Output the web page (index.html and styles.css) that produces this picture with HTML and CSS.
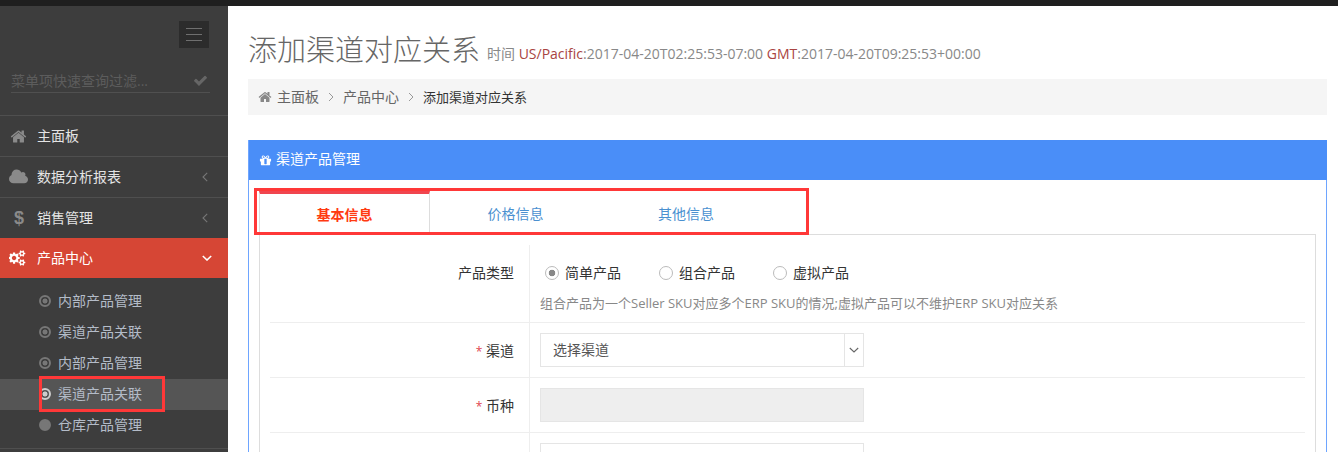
FILE: index.html
```html
<!DOCTYPE html>
<html lang="zh-CN">
<head>
<meta charset="utf-8">
<title>添加渠道对应关系</title>
<link rel="stylesheet" href="styles.css">
</head>
<body>
<div class="topbar"></div>
<div class="layout">
  <aside class="sidebar">
    <div class="toggle-row"><div class="toggle"><i></i><i></i><i></i></div></div>
    <div class="search">
      <span class="search-text">菜单项快速查询过滤...</span>
      <svg class="search-check" viewBox="0 0 1792 1792"><path d="M1671 566q0 40-28 68l-724 724-136 136q-28 28-68 28t-68-28l-136-136-362-362q-28-28-28-68t28-68l136-136q28-28 68-28t68 28l294 295 656-657q28-28 68-28t68 28l136 136q28 28 28 68z"/></svg>
    </div>
    <nav class="menu">
      <a class="item">
        <span class="item-icon"><svg class="ic-home" viewBox="0 0 1792 1792"><path d="M1472 992v480q0 26-19 45t-45 19h-384v-384h-256v384h-384q-26 0-45-19t-19-45v-480q0-1 .5-3t.5-3l575-474 575 474q1 2 1 6zm223-69l-62 74q-8 9-21 11h-3q-13 0-21-7l-692-577-692 577q-12 8-24 7-13-2-21-11l-62-74q-8-10-7-23.5t11-21.5l719-599q32-26 76-26t76 26l244 204v-195q0-14 9-23t23-9h192q14 0 23 9t9 23v408l219 182q10 8 11 21.5t-7 23.5z"/></svg></span>
        <span class="item-text">主面板</span>
      </a>
      <a class="item">
        <span class="item-icon"><svg class="ic-cloud" viewBox="0 0 1920 1792"><path d="M1920 1152q0 159-112.5 271.5t-271.5 112.5h-1088q-185 0-316.5-131.5t-131.5-316.5q0-132 71-241.5t187-163.5q-2-28-2-43 0-212 150-362t362-150q158 0 286.5 88t187.5 230q70-62 166-62 106 0 181 75t75 181q0 75-41 138 129 30 213 134.5t84 239.5z"/></svg></span>
        <span class="item-text">数据分析报表</span>
        <svg class="chev" viewBox="0 0 6 10"><path d="M5.2.8 1 5l4.2 4.2"/></svg>
      </a>
      <a class="item">
        <span class="item-icon"><span class="ic-dollar">$</span></span>
        <span class="item-text">销售管理</span>
        <svg class="chev" viewBox="0 0 6 10"><path d="M5.2.8 1 5l4.2 4.2"/></svg>
      </a>
      <a class="item item-open">
        <span class="item-icon"><svg class="ic-cogs" viewBox="0 0 2048 1792"><path d="M832 896q0-106-75-181t-181-75-181 75-75 181 75 181 181 75 181-75 75-181zm768 512q0-52-38-90t-90-38-90 38-38 90q0 53 37.5 90.5t90.5 37.5 90.5-37.5 37.5-90.5zm0-1024q0-52-38-90t-90-38-90 38-38 90q0 53 37.5 90.5t90.5 37.5 90.5-37.5 37.5-90.5zm-384 421v185q0 10-7 19.5t-16 10.5l-155 24q-11 35-32 76 34 48 90 115 7 11 7 20 0 12-7 19-23 30-82.5 89.5t-78.5 59.5q-11 0-21-7l-115-90q-37 19-77 31-11 108-23 155-7 24-30 24h-186q-11 0-20-7.5t-10-17.5l-23-153q-34-10-75-31l-118 89q-7 7-20 7-11 0-21-8-144-133-144-160 0-9 7-19 10-14 41-53t47-61q-23-44-35-82l-152-24q-10-1-17-9.5t-7-19.5v-185q0-10 7-19.5t16-10.5l155-24q11-35 32-76-34-48-90-115-7-11-7-20 0-12 7-20 22-30 82-89t79-59q11 0 21 7l115 90q34-18 77-32 11-108 23-154 7-24 30-24h186q11 0 20 7.5t10 17.5l23 153q34 10 75 31l118-89q8-7 20-7 11 0 21 8 144 133 144 160 0 8-7 19-12 16-42 54t-45 60q23 48 34 82l152 23q10 2 17 10.5t7 19.5zm640 533v140q0 16-149 31-12 27-30 52 51 113 51 138 0 4-4 7-122 71-124 71-8 0-46-47t-52-68q-20 2-30 2t-30-2q-14 21-52 68t-46 47q-2 0-124-71-4-3-4-7 0-25 51-138-18-25-30-52-149-15-149-31v-140q0-16 149-31 13-29 30-52-51-113-51-138 0-4 4-7 4-2 35-20t59-34 30-16q8 0 46 46.5t52 67.5q20-2 30-2t30 2q51-71 92-112l6-2q4 0 124 70 4 3 4 7 0 25-51 138 17 23 30 52 149 15 149 31zm0-1024v140q0 16-149 31-12 27-30 52 51 113 51 138 0 4-4 7-122 71-124 71-8 0-46-47t-52-68q-20 2-30 2t-30-2q-14 21-52 68t-46 47q-2 0-124-71-4-3-4-7 0-25 51-138-18-25-30-52-149-15-149-31v-140q0-16 149-31 13-29 30-52-51-113-51-138 0-4 4-7 4-2 35-20t59-34 30-16q8 0 46 46.5t52 67.5q20-2 30-2t30 2q51-71 92-112l6-2q4 0 124 70 4 3 4 7 0 25-51 138 17 23 30 52 149 15 149 31z"/></svg></span>
        <span class="item-text">产品中心</span>
        <svg class="chev-down" viewBox="0 0 10 6"><path d="M.8 1 5 5l4.2-4"/></svg>
      </a>
      <ul class="sub">
        <li class="sub-item"><span class="ring"></span>内部产品管理</li>
        <li class="sub-item"><span class="ring"></span>渠道产品关联</li>
        <li class="sub-item"><span class="ring"></span>内部产品管理</li>
        <li class="sub-item sub-active"><span class="ring"></span>渠道产品关联</li>
        <li class="sub-item"><span class="ring ring-full"></span>仓库产品管理</li>
      </ul>
    </nav>
    <div class="mark mark-side"></div>
  </aside>
  <main class="main">
    <h1 class="title">添加渠道对应关系<small class="subtitle">时间 <b>US/Pacific</b>:2017-04-20T02:25:53-07:00 <b>GMT</b>:2017-04-20T09:25:53+00:00</small></h1>
    <div class="crumbs">
      <svg class="crumb-home" viewBox="0 0 1792 1792"><path d="M1472 992v480q0 26-19 45t-45 19h-384v-384h-256v384h-384q-26 0-45-19t-19-45v-480q0-1 .5-3t.5-3l575-474 575 474q1 2 1 6zm223-69l-62 74q-8 9-21 11h-3q-13 0-21-7l-692-577-692 577q-12 8-24 7-13-2-21-11l-62-74q-8-10-7-23.5t11-21.5l719-599q32-26 76-26t76 26l244 204v-195q0-14 9-23t23-9h192q14 0 23 9t9 23v408l219 182q10 8 11 21.5t-7 23.5z"/></svg>
      <span>主面板</span>
      <svg class="crumb-sep" viewBox="0 0 6 10"><path d="M1 1l4 4-4 4"/></svg>
      <span>产品中心</span>
      <svg class="crumb-sep" viewBox="0 0 6 10"><path d="M1 1l4 4-4 4"/></svg>
      <span class="crumb-current">添加渠道对应关系</span>
    </div>
    <section class="panel">
      <header class="panel-head">
        <svg class="ic-gift" viewBox="0 0 1792 1792"><path d="M1056 1356v-716h-320v716q0 25 18 38.5t46 13.5h192q28 0 46-13.5t18-38.5zm-456-844h195l-126-161q-26-31-69-31-40 0-68 28t-28 68 28 68 68 28zm688-96q0-40-28-68t-68-28q-43 0-69 31l-125 161h194q40 0 68-28t28-68zm376 256v320q0 14-9 23t-23 9h-96v416q0 40-28 68t-68 28h-1088q-40 0-68-28t-28-68v-416h-96q-14 0-23-9t-9-23v-320q0-14 9-23t23-9h440q-93 0-158.5-65.5t-65.5-158.5 65.5-158.5 158.5-65.5q107 0 168 77l128 165 128-165q61-77 168-77 93 0 158.5 65.5t65.5 158.5-65.5 158.5-158.5 65.5h440q14 0 23 9t9 23z"/></svg>
        <span>渠道产品管理</span>
      </header>
      <div class="panel-body">
        <div class="tabs">
          <a class="tab tab-active">基本信息</a>
          <a class="tab">价格信息</a>
          <a class="tab">其他信息</a>
          <div class="mark mark-tabs"></div>
        </div>
        <div class="tab-pane">
          <div class="row row-tall">
            <div class="label">产品类型</div>
            <div class="value">
              <div class="radios">
                <label class="radio"><span class="dot dot-on"></span>简单产品</label>
                <label class="radio"><span class="dot"></span>组合产品</label>
                <label class="radio"><span class="dot"></span>虚拟产品</label>
              </div>
              <p class="help">组合产品为一个Seller SKU对应多个ERP SKU的情况;虚拟产品可以不维护ERP SKU对应关系</p>
            </div>
          </div>
          <div class="row">
            <div class="label"><em>*</em> 渠道</div>
            <div class="value">
              <div class="select"><span class="select-text">选择渠道</span><span class="select-arrow"><svg viewBox="0 0 10 6"><path d="M.8 1 5 5l4.2-4"/></svg></span></div>
            </div>
          </div>
          <div class="row">
            <div class="label"><em>*</em> 币种</div>
            <div class="value"><div class="input input-disabled"></div></div>
          </div>
          <div class="row">
            <div class="label"></div>
            <div class="value"><div class="input"></div></div>
          </div>
        </div>
      </div>
    </section>
  </main>
</div>
</body>
</html>
```
FILE: styles.css
```css
* { box-sizing: border-box; }
html, body { margin: 0; padding: 0; height: 452px; overflow: hidden; background: #fff; }
body { font-family: "Open Sans", "Noto Sans CJK SC", sans-serif; font-size: 14px; color: #333; }
svg { display: block; fill: currentColor; }

.topbar { height: 6px; background: #1f1f1f; }
.layout { display: flex; height: 446px; overflow: hidden; }

/* sidebar */
.sidebar { position: relative; width: 228px; flex: none; background: #3d3d3d; overflow: hidden; }
.toggle-row { display: flex; justify-content: flex-end; padding: 15px 19px 0 0; }
.toggle { width: 30px; height: 27px; background: #2c2c2c; display: flex; flex-direction: column; align-items: center; gap: 5px; padding-top: 7px; }
.toggle i { display: block; width: 16px; height: 1px; background: #6f6f6f; }
.search { margin: 21px 18px 0 11px; height: 24px; display: flex; justify-content: space-between; align-items: center; border-bottom: 1px solid #505050; }
.search-text { color: #5c5c5c; font-size: 14px; line-height: 20px; }
.search-check { width: 15px; height: 15px; color: #666; margin-right: 2px; }
.menu { margin-top: 22px; }
.item { height: 41px; display: flex; align-items: center; border-top: 1px solid #4f4f4f; color: #e4e4e4; position: relative; padding-left: 9px; }
.item-icon { width: 28px; display: flex; justify-content: flex-start; color: #8a8a8a; }
.item-text { line-height: 20px; }
.ic-home { width: 17px; height: 17px; margin-left: 1px; }
.ic-cloud { width: 19px; height: 18px; }
.ic-dollar { font: bold 18px/20px "Liberation Sans", sans-serif; margin-left: 5px; }
.ic-cogs { width: 18px; height: 16px; color: #fff; }
.chev { position: absolute; left: 202px; top: 15px; width: 6px; height: 10px; fill: none; stroke: #777; stroke-width: 1.1; }
.chev-down { position: absolute; left: 202px; top: 16px; width: 10px; height: 6px; fill: none; stroke: #fff; stroke-width: 1.6; }
.item-open { background: #d64635; border-top-color: #d64635; height: 40px; color: #fff; padding-bottom: 2px; }
.sub { list-style: none; margin: 0; padding: 8px 0 7px; border-bottom: 1px solid #4f4f4f; }
.sub-item { height: 31px; display: flex; align-items: center; padding: 0 0 2px 39px; color: #b4bcc8; line-height: 20px; }
.sub-active { background: #555; }
.ring { width: 12px; height: 12px; margin-right: 7px; flex: none; border-radius: 50%; border: 2px solid #777; background: radial-gradient(circle, #777 0 2.2px, transparent 2.8px); }
.sub-active .ring { border-color: #ccc; background: radial-gradient(circle, #ccc 0 2.2px, transparent 2.8px); }
.ring-full { background: #777; }

/* annotation rectangles */
.mark { position: absolute; border: 3px solid #ff3838; pointer-events: none; }
.mark-side { left: 39px; top: 370px; width: 126px; height: 36px; }
.mark-tabs { left: -5px; top: -3px; width: 555px; height: 47px; }

/* main */
.main { flex: 1; min-width: 0; padding: 0 11px 0 20px; overflow: hidden; }
.title { margin: 0; padding-top: 24px; height: 73px; font-size: 29px; font-weight: 300; line-height: 40px; color: #666; white-space: nowrap; }
.subtitle { font-size: 14px; font-weight: 400; color: #888; margin-left: 7px; vertical-align: 2px; }
.subtitle b { font-weight: 400; color: #a94442; }
.crumbs { height: 36px; background: #f5f5f5; display: flex; align-items: center; padding-left: 10px; color: #666; line-height: 20px; }
.crumb-home { width: 14px; height: 14px; color: #888; margin-right: 5px; }
.crumb-sep { width: 6px; height: 10px; margin: 0 9px; fill: none; stroke: #999; stroke-width: 1; }
.crumb-current { font-size: 13px; color: #333; }

.panel { margin-top: 25px; border: 1px solid #6ea5ff; border-bottom: 0; background: #fff; }
.panel-head { height: 40px; margin: -1px -1px 0 0; background: #4a8ef8; color: #fff; display: flex; align-items: center; gap: 4px; padding: 0 0 2px 10px; line-height: 20px; }
.ic-gift { width: 13px; height: 13px; margin-top: 2px; }
.panel-body { padding: 11px 10px 0; }
.tabs { position: relative; display: flex; height: 43px; }
.tab { width: 171px; height: 43px; display: flex; align-items: center; justify-content: center; color: #4a90d0; line-height: 20px; padding-top: 3px; }
.tab:last-of-type { width: 170px; }
.tab-active { color: #ff3a10; font-weight: 700; border: 1px solid #ddd; border-bottom: 0; border-top: 3px solid #f0454f; background: #fff; padding-top: 1px; }
.tab-pane { border: 1px solid #ddd; padding: 10px 10px 0; height: 300px; overflow: hidden; }
.row { display: flex; height: 55px; border-bottom: 1px solid #eee; }
.row-tall { height: 78px; }
.label { width: 260px; flex: none; border-right: 1px solid #eee; padding: 18px 15px 0 0; text-align: right; color: #333; line-height: 20px; }
.label em { color: #e0434f; font-style: normal; font-size: 12px; }
.value { flex: 1; padding: 10px 0 0 10px; }
.row-tall .value { padding-top: 18px; }
.radios { display: flex; padding-left: 5px; height: 20px; }
.radio { width: 114px; display: flex; align-items: center; color: #333; line-height: 20px; }
.dot { width: 14px; height: 14px; margin-right: 6px; border: 1px solid #bbb; border-radius: 50%; flex: none; }
.dot-on { background: radial-gradient(circle, #888 0 3px, transparent 3.6px); }
.help { margin: 10px 0 0; font-size: 13px; line-height: 20px; color: #888; white-space: nowrap; }
.select, .input { width: 324px; height: 34px; border: 1px solid #e5e5e5; }
.select { display: flex; align-items: center; justify-content: space-between; color: #555; }
.select-text { padding-left: 12px; line-height: 20px; }
.select-arrow { width: 19px; height: 32px; border-left: 1px solid #e5e5e5; display: flex; align-items: center; justify-content: center; }
.select-arrow svg { width: 10px; height: 6px; fill: none; stroke: #666; stroke-width: 1.1; }
.input-disabled { background: #eee; }
```
